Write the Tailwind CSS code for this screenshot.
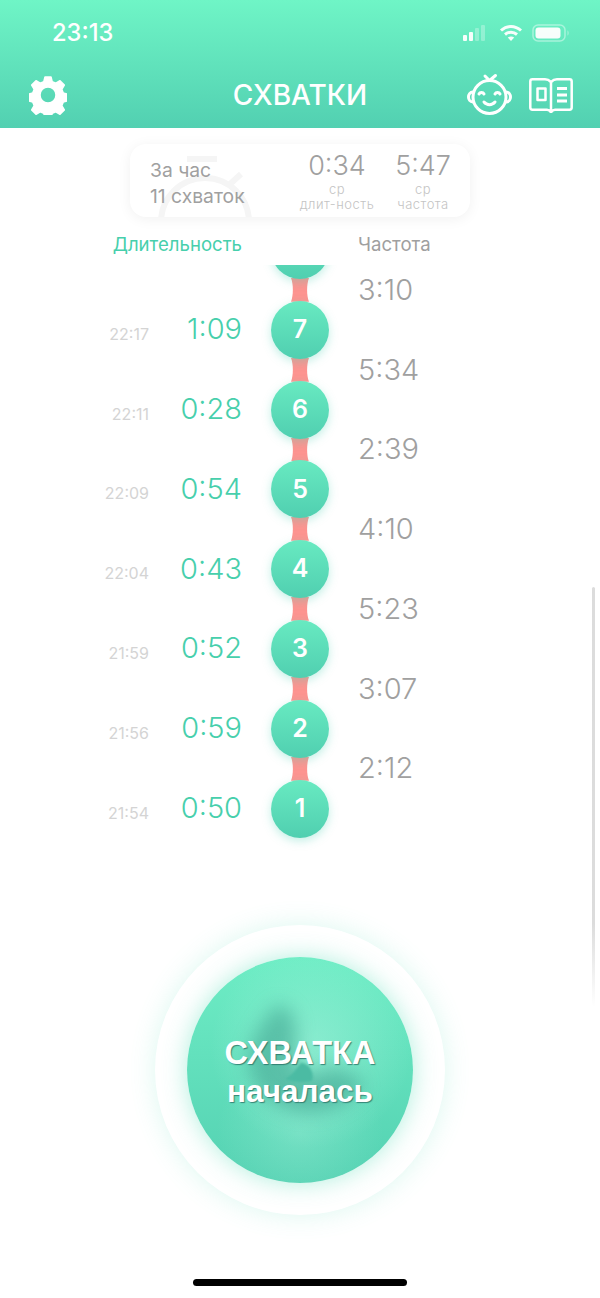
<!DOCTYPE html>
<html lang="en">
<head>
    <meta charset="UTF-8">
    <title>Схватки</title>
    <script src="https://cdn.jsdelivr.net/npm/@tailwindcss/browser@4"></script>
</head>
<body class="bg-white">
<div class="relative w-[600px] h-[1298px] overflow-hidden bg-white font-['Inter',sans-serif]">

    <!-- header -->
    <header class="h-[128px] bg-gradient-to-b from-[#6ff5c6] to-[#52d0b1] text-white">
        <div class="flex items-center justify-between h-[66px] pl-[52px] pr-[30px]">
            <span class="text-[23.7px] font-medium">23:13</span>
            <div class="flex items-center gap-[9px] opacity-95">
                <svg width="28" height="18" viewBox="0 0 28 18" fill="white">
                    <rect x="1" y="11" width="4" height="6" rx="1"/>
                    <rect x="7" y="8" width="4" height="9" rx="1"/>
                    <rect x="13" y="4" width="4" height="13" rx="1" opacity=".3"/>
                    <rect x="19" y="1" width="4" height="16" rx="1" opacity=".3"/>
                </svg>
                <svg width="24" height="18" viewBox="0 0 24 18" fill="none" stroke="white" stroke-width="3">
                    <path d="M2 6.5C8 1 16 1 22 6.5"/>
                    <path d="M6 10.5C9.5 7.5 14.5 7.5 18 10.5"/>
                    <path d="M12 17l-3.2-3.4c1.8-1.4 4.6-1.4 6.4 0z" fill="white" stroke="none"/>
                </svg>
                <svg width="38" height="18" viewBox="0 0 38 18" fill="none">
                    <rect x="1" y="1" width="32" height="16" rx="5" stroke="white" stroke-opacity=".45" stroke-width="1.5"/>
                    <rect x="3.5" y="3.5" width="25" height="11" rx="3" fill="white"/>
                    <path d="M35.5 6.5c1.5.6 1.5 4.4 0 5z" fill="white" fill-opacity=".45"/>
                </svg>
            </div>
        </div>
        <div class="relative flex items-center justify-between h-[62px] pl-[29px] pr-[27px]">
            <svg width="38" height="40" viewBox="0 0 38 40" fill="white" stroke="white" stroke-width="1.5" stroke-linejoin="round" class="-mt-[4px]">
                <path fill-rule="evenodd" d="M16 2h6l1.2 4.700 3.600 1.500 4.200-2.500 4.300 4.400-2.500 4.200 1.500 3.700 4.700 1.200v6.600l-4.700 1.200-1.500 3.700 2.500 4.200-4.300 4.400-4.200-2.500-3.600 1.500-1.200 4.700h-6l-1.200-4.700-3.600-1.500-4.200 2.500-4.300-4.400 2.500-4.200-1.500-3.700-4.700-1.200v-6.600l4.700-1.200 1.500-3.700-2.500-4.200 4.300-4.400 4.200 2.500 3.600-1.500zM19 12a8 8 0 1 0 0 16 8 8 0 0 0 0-16z"/>
            </svg>
            <h1 class="absolute left-0 right-0 text-center text-[28px] font-medium -mt-[4px]">СХВАТКИ</h1>
            <div class="flex items-center gap-[16px] -mt-[4px]">
                <svg width="46" height="44" viewBox="0 0 46 44" fill="none" stroke="white" stroke-width="3" stroke-linecap="round" stroke-linejoin="round">
                    <path d="M18 3l4.500 4.500 6-5"/>
                    <circle cx="22.500" cy="24" r="16.500"/>
                    <path d="M6 19c-3 0-4.500 2.500-4.500 5s1.500 5 4.500 5M39 19c3 0 4.500 2.500 4.500 5s-1.500 5-4.500 5"/>
                    <path d="M12 21c1-2 4-2 5 0M28 21c1-2 4-2 5 0"/>
                    <path d="M17 29c3 3.500 8 3.500 11 0"/>
                </svg>
                <svg width="44" height="35" viewBox="0 0 44 35" fill="none" stroke="white" stroke-width="2.500" stroke-linejoin="round">
                    <path d="M22 4c-2-2-4-2.700-6-2.700H3.500C2.200 1.300 1.300 2.200 1.300 3.500v26c0 1.300.9 2.200 2.200 2.200H18c2 0 3 1 4 2.500 1-1.500 2-2.500 4-2.500h14.500c1.300 0 2.200-.9 2.200-2.200v-26c0-1.300-.9-2.200-2.200-2.200H28c-2 0-4 .7-6 2.700zv30"/>
                    <rect x="8.500" y="10.500" width="8" height="11.500"/>
                    <path d="M28 10.500h10M28 17h10M28 23h10" stroke-width="3"/>
                </svg>
            </div>
        </div>
    </header>

    <!-- summary card -->
    <div class="relative mx-auto mt-[16px] w-[340px] h-[73px] rounded-[16px] bg-white shadow-[0_2px_14px_rgba(0,0,0,0.06)] overflow-hidden flex text-[#a0a0a0]">
        <svg class="absolute left-[25px] top-[10px]" width="100" height="63" viewBox="0 0 100 63" fill="none" stroke="#f5f5f5" stroke-width="6">
            <circle cx="50" cy="68" r="44"/>
            <path d="M32 5h30M86 20L74 31"/>
        </svg>
        <div class="relative pl-[20px] pt-[13px] w-[165px] text-[19.3px] leading-[26px] whitespace-nowrap">
            <div>За час</div>
            <div>11 схваток</div>
        </div>
        <div class="relative flex flex-col items-center w-[80px] ml-[2px] pt-[5px]">
            <div class="text-[27px] font-[350] leading-[33px]">0:34</div>
            <div class="text-[13px] font-light tracking-[0.5px] leading-[15px] text-[#c4c4c4]">ср</div>
            <div class="text-[13px] font-light tracking-[0.5px] leading-[14px] text-[#c4c4c4] whitespace-nowrap">длит-ность</div>
        </div>
        <div class="relative flex flex-col items-center w-[80px] ml-[6px] pt-[5px]">
            <div class="text-[27px] font-[350] leading-[33px]">5:47</div>
            <div class="text-[13px] font-light tracking-[0.5px] leading-[15px] text-[#c4c4c4]">ср</div>
            <div class="text-[13px] font-light tracking-[0.5px] leading-[14px] text-[#c4c4c4]">частота</div>
        </div>
    </div>

    <!-- column titles -->
    <div class="relative flex h-[48px] pt-[8px] items-center text-[18.6px]">
        <div class="w-[242px] text-right text-[#47cfac]">Длительность</div>
        <div class="w-[58px] ml-[29px]"></div>
        <div class="ml-[29px] text-[#a0a0a0]">Частота</div>
    </div>

    <!-- contractions list -->
    <div class="flex h-[600px] overflow-hidden">
        <div class="w-[271px] pt-[24px]">
            <div class="flex items-center h-[79.8px] w-[242px] text-right">
                <span class="w-[149px] text-[16px] text-[#d4d4d4] mt-[10px]">22:17</span>
                <span class="w-[93px] text-[29px] font-[350] text-[#47cfac]">1:09</span>
            </div>
            <div class="flex items-center h-[79.8px] w-[242px] text-right">
                <span class="w-[149px] text-[16px] text-[#d4d4d4] mt-[10px]">22:11</span>
                <span class="w-[93px] text-[29px] font-[350] text-[#47cfac]">0:28</span>
            </div>
            <div class="flex items-center h-[79.8px] w-[242px] text-right">
                <span class="w-[149px] text-[16px] text-[#d4d4d4] mt-[10px]">22:09</span>
                <span class="w-[93px] text-[29px] font-[350] text-[#47cfac]">0:54</span>
            </div>
            <div class="flex items-center h-[79.8px] w-[242px] text-right">
                <span class="w-[149px] text-[16px] text-[#d4d4d4] mt-[10px]">22:04</span>
                <span class="w-[93px] text-[29px] font-[350] text-[#47cfac]">0:43</span>
            </div>
            <div class="flex items-center h-[79.8px] w-[242px] text-right">
                <span class="w-[149px] text-[16px] text-[#d4d4d4] mt-[10px]">21:59</span>
                <span class="w-[93px] text-[29px] font-[350] text-[#47cfac]">0:52</span>
            </div>
            <div class="flex items-center h-[79.8px] w-[242px] text-right">
                <span class="w-[149px] text-[16px] text-[#d4d4d4] mt-[10px]">21:56</span>
                <span class="w-[93px] text-[29px] font-[350] text-[#47cfac]">0:59</span>
            </div>
            <div class="flex items-center h-[79.8px] w-[242px] text-right">
                <span class="w-[149px] text-[16px] text-[#d4d4d4] mt-[10px]">21:54</span>
                <span class="w-[93px] text-[29px] font-[350] text-[#47cfac]">0:50</span>
            </div>
        </div>
        <div id="track" class="w-[58px] -mt-[44px] flex flex-col items-center"></div>
        <div class="ml-[29px] -mt-[15px] flex flex-col text-[29px] font-[350] text-[#a0a0a0]">
            <div class="h-[79.7px] flex items-center">3:10</div>
            <div class="h-[79.7px] flex items-center">5:34</div>
            <div class="h-[79.7px] flex items-center">2:39</div>
            <div class="h-[79.7px] flex items-center">4:10</div>
            <div class="h-[79.7px] flex items-center">5:23</div>
            <div class="h-[79.7px] flex items-center">3:07</div>
            <div class="h-[79.7px] flex items-center">2:12</div>
        </div>
    </div>

    <!-- scrollbar -->
    <div class="absolute left-[592px] top-[587px] w-[3px] h-[420px] rounded-full bg-gradient-to-b from-[#dcdcdc] via-[#dcdcdc] via-80% to-transparent"></div>

    <!-- big button -->
    <div class="absolute left-[155px] top-[925px] w-[290px] h-[290px] rounded-full bg-white shadow-[0_0_26px_rgba(80,220,180,0.2)] flex items-center justify-center">
        <div class="relative w-[226px] h-[226px] rounded-full overflow-hidden bg-gradient-to-b from-[#6eedc5] to-[#54d1b2] shadow-[0_0_24px_rgba(80,220,180,0.45)] flex flex-col items-center justify-center">
            <div class="absolute inset-0 bg-[radial-gradient(circle_at_55%_40%,rgba(175,245,225,0.5)_0%,rgba(175,245,225,0)_55%)]"></div>
            <div class="absolute inset-0 bg-[radial-gradient(circle_at_50%_78%,rgba(175,245,225,0.3)_0%,rgba(175,245,225,0)_40%)]"></div>
            <svg class="absolute left-0 top-0 blur-[9px]" width="226" height="226" viewBox="0 0 226 226" fill="#389a88" fill-opacity=".5">
                <path d="M90 48C112 50 110 78 108 95C106 115 118 122 135 114C150 105 162 118 176 124C170 150 130 160 108 154C80 148 62 128 62 105C62 82 78 60 90 48z"/>
            </svg>
            <svg class="absolute left-0 top-0 blur-[1px]" width="226" height="226" viewBox="0 0 226 226" fill="#4bbba3">
                <path d="M98 122C106 118 110 110 114 106C122 106 128 116 125 124C116 126 106 125 98 122z"/>
            </svg>
            <div class="relative mt-[4px] text-white font-['Liberation_Sans',sans-serif] font-bold text-[32.5px] leading-[38px] text-center [text-shadow:1px_1px_1px_rgba(40,110,100,0.8)]">СХВАТКА<br><span class="text-[31.5px]">началась</span></div>
        </div>
    </div>

    <!-- home indicator -->
    <div class="absolute left-[193px] top-[1279px] w-[214px] h-[7px] rounded-full bg-black"></div>
</div>

<script>
    // number circles with the pink links between them
    const track = document.getElementById('track');
    const circle = 'relative shrink-0 w-[58px] h-[58px] rounded-full bg-gradient-to-b from-[#68eac1] to-[#50cfb0] shadow-[0_3px_10px_rgba(80,210,180,0.35)] flex items-center justify-center text-white text-[25px] font-semibold';
    const link = '<svg width="22" height="23.8" viewBox="0 0 22 23" preserveAspectRatio="none" class="-my-[1px] shrink-0"><path d="M2 0C4.5 6 4.5 17 2 23H20C17.5 17 17.5 6 20 0z" fill="#fd9490"/></svg>';
    // first circle sits under the titles, only its lower edge shows
    let html = `<div class="${circle}"></div>`;
    [7, 6, 5, 4, 3, 2, 1].forEach(n => {
        html += link + `<div class="${circle}">${n}</div>`;
    });
    track.innerHTML = html;
</script>
</body>
</html>
